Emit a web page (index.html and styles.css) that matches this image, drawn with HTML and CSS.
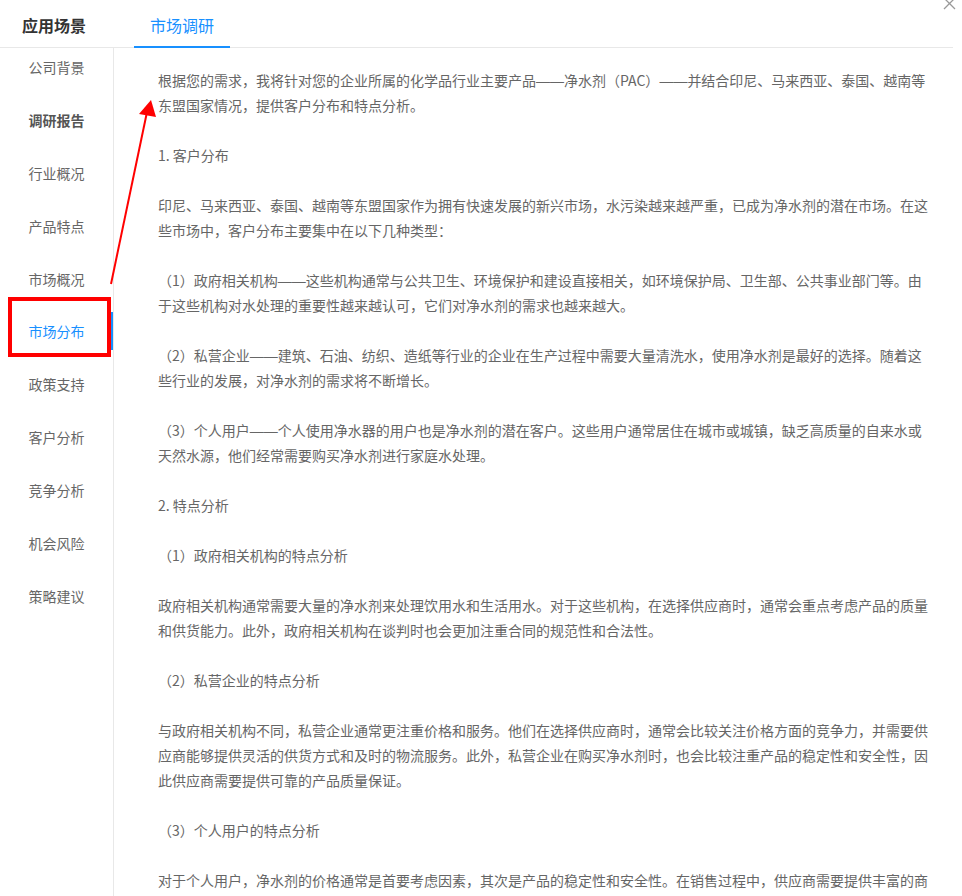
FILE: index.html
```html
<!DOCTYPE html>
<html lang="zh-CN">
<head>
    <meta charset="UTF-8">
    <meta name="viewport" content="width=device-width, initial-scale=1.0">
    <title>市场调研</title>
    <link rel="stylesheet" href="styles.css">
</head>
<body>
    <div class="app">
        <div class="header">
            <div class="title">应用场景</div>
            <div class="tab active">市场调研</div>
            <button class="close" aria-label="关闭">
                <svg width="13" height="13" viewBox="0 0 13 13"><path d="M1 1L12 12M12 1L1 12" stroke="#999" stroke-width="1.3" fill="none"/></svg>
            </button>
        </div>
        <div class="main">
            <ul class="menu">
                <li>公司背景</li>
                <li class="group">调研报告</li>
                <li>行业概况</li>
                <li>产品特点</li>
                <li>市场概况</li>
                <li class="active">市场分布</li>
                <li>政策支持</li>
                <li>客户分析</li>
                <li>竞争分析</li>
                <li>机会风险</li>
                <li>策略建议</li>
            </ul>
            <div class="content">
                <div class="report">
                    <p>根据您的需求，我将针对您的企业所属的化学品行业主要产品<span class="dash">——</span>净水剂（PAC）<span class="dash">——</span>并结合印尼、马来西亚、泰国、越南等东盟国家情况，提供客户分布和特点分析。</p>
                    <p>1. 客户分布</p>
                    <p>印尼、马来西亚、泰国、越南等东盟国家作为拥有快速发展的新兴市场，水污染越来越严重，已成为净水剂的潜在市场。在这些市场中，客户分布主要集中在以下几种类型：</p>
                    <p>（1）政府相关机构<span class="dash">——</span>这些机构通常与公共卫生、环境保护和建设直接相关，如环境保护局、卫生部、公共事业部门等。由于这些机构对水处理的重要性越来越认可，它们对净水剂的需求也越来越大。</p>
                    <p>（2）私营企业<span class="dash">——</span>建筑、石油、纺织、造纸等行业的企业在生产过程中需要大量清洗水，使用净水剂是最好的选择。随着这些行业的发展，对净水剂的需求将不断增长。</p>
                    <p>（3）个人用户<span class="dash">——</span>个人使用净水器的用户也是净水剂的潜在客户。这些用户通常居住在城市或城镇，缺乏高质量的自来水或天然水源，他们经常需要购买净水剂进行家庭水处理。</p>
                    <p>2. 特点分析</p>
                    <p>（1）政府相关机构的特点分析</p>
                    <p>政府相关机构通常需要大量的净水剂来处理饮用水和生活用水。对于这些机构，在选择供应商时，通常会重点考虑产品的质量和供货能力。此外，政府相关机构在谈判时也会更加注重合同的规范性和合法性。</p>
                    <p>（2）私营企业的特点分析</p>
                    <p>与政府相关机构不同，私营企业通常更注重价格和服务。他们在选择供应商时，通常会比较关注价格方面的竞争力，并需要供应商能够提供灵活的供货方式和及时的物流服务。此外，私营企业在购买净水剂时，也会比较注重产品的稳定性和安全性，因此供应商需要提供可靠的产品质量保证。</p>
                    <p>（3）个人用户的特点分析</p>
                    <p>对于个人用户，净水剂的价格通常是首要考虑因素，其次是产品的稳定性和安全性。在销售过程中，供应商需要提供丰富的商品信息和专业的使用指导，以满足个人用户的需求。</p>
                </div>
            </div>
        </div>
    </div>

    <!-- 标注：红框和箭头 -->
    <svg class="markup" width="962" height="896" viewBox="0 0 962 896">
        <rect x="10" y="299" width="99" height="56" fill="none" stroke="#ff0000" stroke-width="4"/>
        <line x1="111" y1="284" x2="147" y2="112" stroke="#ff0000" stroke-width="2"/>
        <polygon points="151,100 139,114 156,117" fill="#ff0000"/>
    </svg>
</body>
</html>
```

FILE: styles.css
```css
* {
    box-sizing: border-box;
}

html, body {
    margin: 0;
    height: 100%;
    overflow: hidden;
    background: #fff;
}

body {
    font-family: "Noto Sans CJK SC", "Microsoft YaHei", sans-serif;
    font-size: 14px;
    color: #666;
}

.app {
    width: 953px;
    height: 100vh;
    display: flex;
    flex-direction: column;
}

/* 顶部标签栏 */
.header {
    position: relative;
    height: 48px;
    flex: none;
    display: flex;
    align-items: stretch;
    border-bottom: 1px solid #e8e8e8;
}

.title {
    width: 134px;
    padding-left: 22px;
    line-height: 51px;
    font-size: 16px;
    font-weight: bold;
    color: #333;
}

.tab {
    width: 96px;
    text-align: center;
    line-height: 51px;
    font-size: 16px;
    color: #333;
    margin-bottom: -1px;
}

.tab.active {
    color: #1890ff;
    border-bottom: 2px solid #1890ff;
}

.close {
    position: absolute;
    top: -3px;
    right: -3px;
    border: none;
    background: none;
    padding: 0;
    cursor: pointer;
    line-height: 0;
}

.main {
    flex: 1;
    display: flex;
    min-height: 0;
}

/* 左侧菜单 */
.menu {
    width: 114px;
    flex: none;
    margin: 0;
    padding: 0;
    list-style: none;
    border-right: 1px solid #e8e8e8;
}

.menu li {
    position: relative;
    height: 38px;
    line-height: 38px;
    margin-bottom: 14.9px;
    text-align: center;
    font-size: 14px;
    color: #666;
    cursor: pointer;
}

.menu li.group {
    font-weight: bold;
    color: #555;
}

.menu li.active {
    color: #1890ff;
}

.menu li.active::after {
    content: "";
    position: absolute;
    top: 0;
    right: 0;
    width: 3px;
    height: 38px;
    background: #1890ff;
}

/* 右侧报告 */
.content {
    flex: 1;
    padding: 20px 0 0 44px;
    overflow: hidden;
}

.report {
    width: 776px;
}

.report p {
    margin: 0 0 25px;
    line-height: 25px;
}

.dash {
    font-family: "Liberation Sans", Arial, sans-serif;
    line-height: 1;
}

.markup {
    position: absolute;
    top: 0;
    left: 0;
    pointer-events: none;
}
```
